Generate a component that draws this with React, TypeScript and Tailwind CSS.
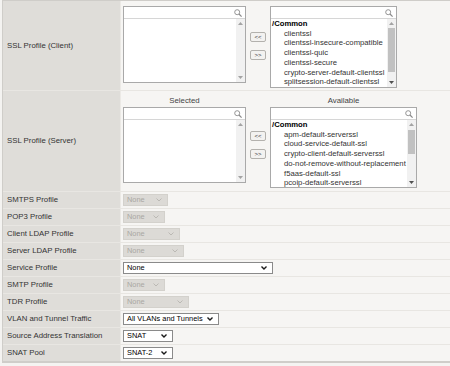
import clsx from "clsx";
import type { ReactNode } from "react";

const clientItems = [
  "clientssl",
  "clientssl-insecure-compatible",
  "clientssl-quic",
  "clientssl-secure",
  "crypto-server-default-clientssl",
  "splitsession-default-clientssl",
];

const serverItems = [
  "apm-default-serverssl",
  "cloud-service-default-ssl",
  "crypto-client-default-serverssl",
  "do-not-remove-without-replacement",
  "f5aas-default-ssl",
  "pcoip-default-serverssl",
];

const SearchIcon = () => (
  <svg width="8" height="8" viewBox="0 0 8 8" fill="none" stroke="#8a8a8a" strokeWidth="0.9">
    <circle cx="3.2" cy="3.2" r="2.5" />
    <path d="M5 5 L7.6 7.6" strokeWidth="1.2" />
  </svg>
);

const Arrow = ({ up, dark }: { up?: boolean; dark?: boolean }) => (
  <svg width="5" height="3" viewBox="0 0 5 3">
    <path d={up ? "M0 3 L2.5 0 L5 3 Z" : "M0 0 L2.5 3 L5 0 Z"} fill={dark ? "#505050" : "#a3a3a3"} />
  </svg>
);

const Scrollbar = ({ thumb }: { thumb?: string }) => (
  <div className="relative w-[9px] shrink-0 bg-[#f1f1f1]">
    <div className="absolute inset-x-0 top-0 flex h-[9px] items-center justify-center">
      <Arrow up />
    </div>
    {thumb && <div className={clsx("absolute inset-x-[1px] bg-[#c1c1c1]", thumb)} />}
    <div className="absolute inset-x-0 bottom-0 flex h-[9px] items-center justify-center">
      <Arrow dark={!!thumb} />
    </div>
  </div>
);

const ListBox = ({
  className,
  items = [],
  thumb,
}: {
  className: string;
  items?: string[];
  thumb?: string;
}) => (
  <div className={clsx("flex shrink-0 flex-col border border-[#a9a9a9] bg-white", className)}>
    <div className="flex h-[12px] shrink-0 items-center justify-end border-b border-[#d6d6d6] pr-[3px]">
      <SearchIcon />
    </div>
    <div className="flex min-h-0 flex-1">
      <div className="min-w-0 flex-1 overflow-hidden pl-[1px] text-[7.7px] leading-[9.7px] text-[#333]">
        {items.length > 0 && <div className="font-bold text-black">/Common</div>}
        {items.map((item) => (
          <div key={item} className="whitespace-nowrap pl-[12px]">
            {item}
          </div>
        ))}
      </div>
      <Scrollbar thumb={thumb} />
    </div>
  </div>
);

const MoveButton = ({ children }: { children: ReactNode }) => (
  <div className="flex h-[10px] w-[16px] items-center justify-center rounded-[2px] border border-[#b3b1ad] bg-[#f3f2f0] text-[6px] leading-none text-[#333]">
    {children}
  </div>
);

const Buttons = ({ offset }: { offset: string }) => (
  <div className={clsx("flex w-[24px] shrink-0 flex-col items-center gap-[8px]", offset)}>
    <MoveButton>&lt;&lt;</MoveButton>
    <MoveButton>&gt;&gt;</MoveButton>
  </div>
);

const Chevron = ({ dark }: { dark?: boolean }) => (
  <svg width="6" height="4" viewBox="0 0 6 4" fill="none">
    <path
      d="M0.5 0.5 L3 3 L5.5 0.5"
      stroke={dark ? "#1a1a1a" : "#b2b0ab"}
      strokeWidth={dark ? 1.4 : 0.8}
    />
  </svg>
);

const Select = ({
  value,
  className,
  disabled,
}: {
  value: string;
  className: string;
  disabled?: boolean;
}) => (
  <div
    className={clsx(
      "flex h-[12px] items-center justify-between pl-[3px] pr-[5px] text-[7.4px] leading-none",
      disabled
        ? "border border-[#d3d1cc] bg-[#dcdad6] text-[#a9a7a2]"
        : "border border-[#8a8a8a] bg-white text-black",
      className
    )}
  >
    <span>{value}</span>
    <Chevron dark={!disabled} />
  </div>
);

const Row = ({
  label,
  height,
  last,
  children,
}: {
  label: string;
  height: string;
  last?: boolean;
  children: ReactNode;
}) => (
  <div className={clsx("flex", height, !last && "border-b border-[#e8e6e2]")}>
    <div className="flex w-[118px] shrink-0 items-center border-r border-[#ebe9e5] bg-[#dfddd9] pl-[4px] text-[7.8px] text-[#333]">
      {label}
    </div>
    <div className="min-w-0 flex-1 pl-[2px]">{children}</div>
  </div>
);

const SmallRow = ({ label, last, children }: { label: string; last?: boolean; children: ReactNode }) => (
  <Row label={label} height={last ? "h-[16px]" : "h-[17px]"} last={last}>
    <div className="flex h-full items-center">{children}</div>
  </Row>
);

export default function App() {
  return (
    <div className="h-[366px] w-[450px] overflow-hidden bg-[#f4f3f1] pl-[2px] font-['Liberation_Sans',Arial,sans-serif]">
      <div className="border-b-[2px] border-l border-t border-[#cfcdc9] bg-[#f6f5f3]">
        <Row label="SSL Profile (Client)" height="h-[90px]">
          <div className="flex pt-[5px]">
            <ListBox className="h-[77px] w-[123px]" />
            <Buttons offset="pt-[26px]" />
            <ListBox className="h-[82px] w-[127px]" items={clientItems} thumb="top-[9px] h-[44px]" />
          </div>
        </Row>

        <Row label="SSL Profile (Server)" height="h-[101px]">
          <div className="flex pt-[4px]">
            <div className="flex flex-col">
              <div className="h-[12px] text-center text-[7.8px] leading-[12px] text-[#444]">Selected</div>
              <ListBox className="h-[76px] w-[123px]" />
            </div>
            <Buttons offset="pt-[36px]" />
            <div className="flex flex-col">
              <div className="h-[12px] text-center text-[7.8px] leading-[12px] text-[#444]">Available</div>
              <ListBox className="h-[81px] w-[147px]" items={serverItems} thumb="top-[10px] h-[24px]" />
            </div>
          </div>
        </Row>

        <SmallRow label="SMTPS Profile">
          <Select value="None" className="w-[45px]" disabled />
        </SmallRow>
        <SmallRow label="POP3 Profile">
          <Select value="None" className="w-[42px]" disabled />
        </SmallRow>
        <SmallRow label="Client LDAP Profile">
          <Select value="None" className="w-[57px]" disabled />
        </SmallRow>
        <SmallRow label="Server LDAP Profile">
          <Select value="None" className="w-[61px]" disabled />
        </SmallRow>
        <SmallRow label="Service Profile">
          <Select value="None" className="w-[150px]" />
        </SmallRow>
        <SmallRow label="SMTP Profile">
          <Select value="None" className="w-[42px]" disabled />
        </SmallRow>
        <SmallRow label="TDR Profile">
          <Select value="None" className="w-[66px]" disabled />
        </SmallRow>
        <SmallRow label="VLAN and Tunnel Traffic">
          <Select value="All VLANs and Tunnels" className="w-[96px]" />
        </SmallRow>
        <SmallRow label="Source Address Translation">
          <Select value="SNAT" className="w-[50px]" />
        </SmallRow>
        <SmallRow label="SNAT Pool" last>
          <Select value="SNAT-2" className="w-[50px]" />
        </SmallRow>
      </div>
    </div>
  );
}
